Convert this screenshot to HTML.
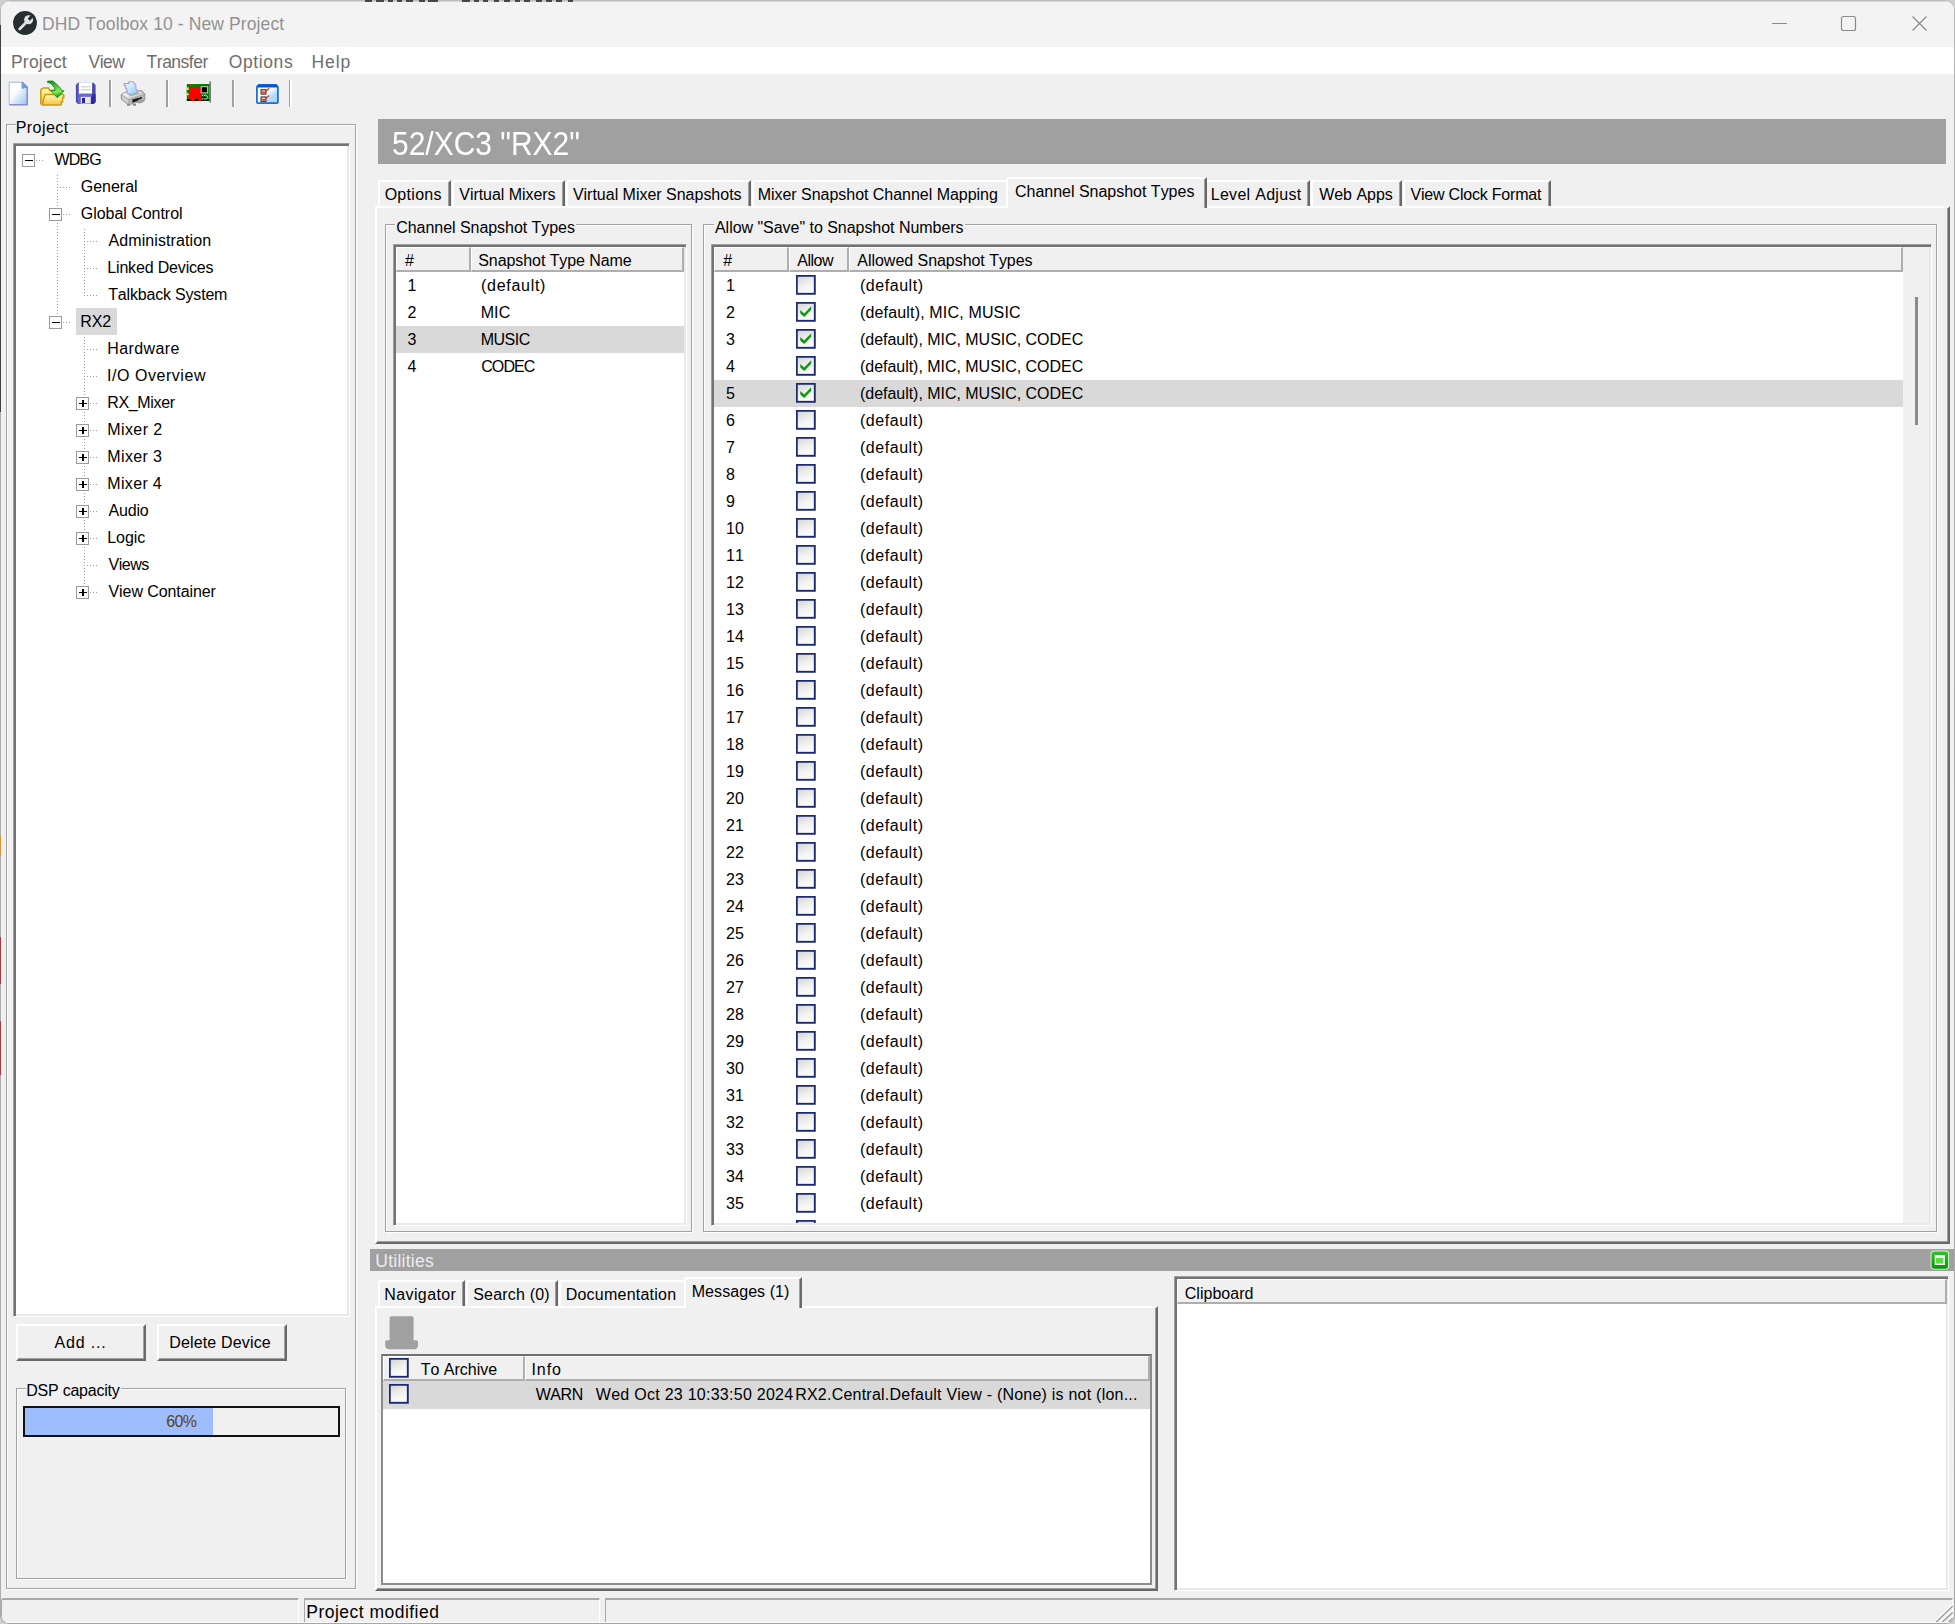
<!DOCTYPE html>
<html><head><meta charset="utf-8"><title>DHD Toolbox 10 - New Project</title>
<style>
*{box-sizing:border-box;margin:0;padding:0}
html,body{width:1955px;height:1624px;overflow:hidden}
body{position:relative;background:#cfcfcf;font-family:"Liberation Sans",sans-serif;font-size:16px;color:#000}
.a{position:absolute}
.x{position:absolute;white-space:nowrap;height:0;line-height:0;font-size:16px;font-kerning:none}
#frame{position:absolute;left:0;top:0;width:1955px;height:1624px;border-radius:10px 10px 9px 9px;background:linear-gradient(#bdbdbd 0,#b4b4b4 60px,#a6a6a6 100%)}
#win{position:absolute;left:1px;top:1px;width:1953px;height:1622px;background:#f0f0f0;border-radius:9px 9px 8px 8px;overflow:hidden}
.sep{position:absolute;width:3px;background:linear-gradient(90deg,#a0a0a0 0,#a0a0a0 1.5px,#fff 1.5px,#fff 3px)}
.gb{position:absolute;border:1px solid #a2a2a2;box-shadow:inset 1px 1px 0 #fff,1px 1px 0 #fff}
.sunk{position:absolute;background:#fff;border:1px solid;border-color:#a0a0a0 #fff #fff #a0a0a0;box-shadow:inset 2px 2px 0 #737373,inset -2px -2px 0 #e9e9e9}
.raised{position:absolute;border-style:solid;border-width:2px 2px 2px 2px;border-color:#fff #696969 #696969 #fff;box-shadow:inset -1px -1px 0 #a0a0a0}
.hdr{position:absolute;background:#f0f0f0;border-style:solid;border-width:1px 2px 2px 1px;border-color:#fff #aeaeae #aeaeae #fff}
.tab{position:absolute;background:#f0f0f0;border-style:solid;border-width:2px 2px 0 2px;border-color:#fff #696969 #f0f0f0 #fff;border-radius:3px 0 0 0;box-shadow:inset -1px 0 0 #a0a0a0}
.pm{position:absolute;width:13px;height:13px;border:1px solid #9a9a9a;background:#fff}
.pm:before{content:"";position:absolute;left:2px;top:4.6px;width:7.5px;height:1.7px;background:#000}
.pm.plus:after{content:"";position:absolute;left:4.9px;top:1.8px;width:1.7px;height:7.5px;background:#000}
.dv{position:absolute;width:1.5px;background-image:linear-gradient(#9c9c9c 50%,transparent 50%);background-size:1.5px 3px}
.dh{position:absolute;height:1.5px;background-image:linear-gradient(90deg,#9c9c9c 50%,transparent 50%);background-size:3px 1.5px}

</style></head>
<body>
<div id="frame"></div>
<div class="a" style="left:0;top:25px;width:1px;height:387px;background:#404040"></div><div class="a" style="left:0;top:412px;width:1px;height:1204px;background:#adadad"></div><div class="a" style="left:0;top:836px;width:1px;height:20px;background:#d89434"></div><div class="a" style="left:0;top:937px;width:1px;height:47px;background:#a83844"></div><div class="a" style="left:0;top:1021px;width:1px;height:54px;background:#a83844"></div>
<svg width="0" height="0" style="position:absolute"><defs>
<linearGradient id="gcb" x1="0.2" y1="0" x2="0.6" y2="1"><stop offset="0" stop-color="#d6d6d2"/><stop offset="0.55" stop-color="#f2f2f0"/><stop offset="1" stop-color="#fdfdfd"/></linearGradient>
<symbol id="cb" viewBox="0 0 20 20"><rect x="0.8" y="0.8" width="18" height="18" fill="url(#gcb)" stroke="#1c2a72" stroke-width="1.9"/></symbol>
<symbol id="cbc" viewBox="0 0 20 20"><rect x="0.8" y="0.8" width="18" height="18" fill="url(#gcb)" stroke="#1c2a72" stroke-width="1.9"/><path d="M4.3 8 L8.2 11.5 L15.2 4.2 V7.7 L8.2 15 L4.3 11.5 Z" fill="#089a08"/></symbol>
</defs></svg>
<div id="win">
<div class="a" style="left:0px;top:0px;width:1953px;height:46px;background:#f3f3f3"></div>
<div class="a" style="left:0px;top:46px;width:1953px;height:27px;background:#fff"></div>
<svg class="a" style="left:12px;top:10px;filter:blur(.35px)" width="24" height="24" viewBox="0 0 24 24"><defs><clipPath id="cw"><circle cx="12" cy="12" r="11.9"/></clipPath></defs><circle cx="12" cy="12" r="11.9" fill="#262e30"/><path d="M6.7 18 L13.6 11" stroke="#dde3e5" stroke-width="2.7" stroke-linecap="round"/><circle cx="15.6" cy="8.8" r="4.5" fill="#dde3e5"/><path d="M16.7 7.7 L21.5 2.9" stroke="#262e30" stroke-width="3.2" stroke-linecap="round" clip-path="url(#cw)"/></svg>
<div class="x" style="left:41.06px;top:23px;letter-spacing:0.104px;font-size:17.5px;color:#929292;">DHD Toolbox 10 - New Project</div>
<svg class="a" style="left:1759px;top:9px" width="180" height="30" viewBox="0 0 180 30" fill="none" stroke="#8a8a8a" stroke-width="1.2"><path d="M12 13.5 H27"/><rect x="81.5" y="6.5" width="14" height="14" rx="2"/><path d="M152.5 6.5 L166.5 20.5 M166.5 6.5 L152.5 20.5"/></svg>
<div class="x" style="left:9.96px;top:61px;letter-spacing:0.216px;font-size:17.5px;color:#6e6e6e;">Project</div>
<div class="x" style="left:87.52px;top:61px;letter-spacing:-0.499px;font-size:17.5px;color:#6e6e6e;">View</div>
<div class="x" style="left:145.61px;top:61px;letter-spacing:-0.496px;font-size:17.5px;color:#6e6e6e;">Transfer</div>
<div class="x" style="left:227.77px;top:61px;letter-spacing:0.592px;font-size:17.5px;color:#6e6e6e;">Options</div>
<div class="x" style="left:310.56px;top:61px;letter-spacing:0.900px;font-size:17.5px;color:#6e6e6e;">Help</div>
<div class="sep" style="left:107.8px;top:79px;width:3px;height:27px;"></div>
<div class="sep" style="left:164.8px;top:79px;width:3px;height:27px;"></div>
<div class="sep" style="left:230.8px;top:79px;width:3px;height:27px;"></div>
<div class="sep" style="left:287.9px;top:79px;width:3px;height:27px;"></div>
<svg class="a" style="left:5px;top:78px;filter:blur(0.35px);overflow:visible" width="25" height="29" viewBox="6 79 25 29"><defs><linearGradient id="gnew" x1="0.1" y1="0.15" x2="0.95" y2="0.95"><stop offset="0.3" stop-color="#ffffff"/><stop offset="0.6" stop-color="#d4e6fa"/><stop offset="1" stop-color="#94ccf4"/></linearGradient></defs>
<path d="M9.3 82.2 H22 L27.2 87.2 V104.8 H9.3 Z" fill="url(#gnew)"/>
<path d="M9.3 104.8 V82.2 H22" fill="none" stroke="#bccaee" stroke-width="1.5"/>
<path d="M22 82.2 L27.2 87.2 V104.8 H9.3" fill="none" stroke="#8c8cc4" stroke-width="1.6"/>
<path d="M22 82.2 L27.2 87.2 L22.2 88.4 Z" fill="#56a6f0" stroke="#8494cc" stroke-width="1"/></svg>
<svg class="a" style="left:37px;top:78px;filter:blur(0.35px);overflow:visible" width="28" height="29" viewBox="38 79 28 29"><defs><linearGradient id="gfb" x1="0" y1="0" x2="0" y2="1"><stop offset="0" stop-color="#ffffa8"/><stop offset="1" stop-color="#f0c040"/></linearGradient>
<linearGradient id="gff" x1="0" y1="0" x2="0" y2="1"><stop offset="0" stop-color="#fff4c0"/><stop offset="0.3" stop-color="#ffe888"/><stop offset="1" stop-color="#fcc04c"/></linearGradient>
<linearGradient id="gar" x1="0" y1="0" x2="0.3" y2="1"><stop offset="0" stop-color="#0c8a0c"/><stop offset="0.75" stop-color="#86ea58"/><stop offset="1" stop-color="#2aa020"/></linearGradient></defs>
<path d="M40.8 104.5 V90.5 Q40.8 89 42.3 88.8 L43.4 88 H48.4 L49.6 90.3 H58 V95" fill="url(#gfb)" stroke="#c89a18" stroke-width="1.5"/>
<path d="M42.2 105 L44.6 95.6 Q44.9 94.6 46 94.6 H63 Q63.8 94.6 63.8 95.4 V97.6 H62.6 V101.8 H61.4 V104 Q61.4 105 60.4 105 Z" fill="url(#gff)" stroke="#c89a18" stroke-width="1.5"/>
<path d="M47.6 81.1 L52.8 81.1 L55.6 83.2 L58.2 85.8 L60.6 88.4 L61.6 90.7 L64 90.8 L57.4 97.8 L50.6 90.8 L55 90.6 L54.6 88 L53.2 86 L51.8 84.4 L50.2 83.2 L47.6 82.4 Z" fill="url(#gar)" stroke="#148c14" stroke-width="0.9" stroke-linejoin="round"/></svg>
<svg class="a" style="left:73px;top:80px;filter:blur(0.35px);overflow:visible" width="24" height="25" viewBox="74 81 24 25"><path d="M75.9 85 L78 82.8 H93.4 L95.6 85 V102 L93.6 104 H78 L75.9 102 Z" fill="#4848b0"/>
<path d="M77.6 84 H80 V104 H79 L77.6 102.6 Z" fill="#6464d4"/>
<path d="M91 94 H95.6 V102 L93.6 104 H91 Z" fill="#2c2c9c"/>
<path d="M79 94 H92 V96.8 H79 Z" fill="#6868d0"/>
<rect x="78.9" y="82.6" width="13.2" height="11" fill="#ffffff"/>
<rect x="81" y="86.1" width="9.8" height="1.3" fill="#d4d4d4"/><rect x="81" y="89.1" width="9.8" height="1.3" fill="#d4d4d4"/>
<rect x="80.6" y="96.8" width="10.2" height="6.8" fill="#e6e4e2"/><rect x="80.6" y="103" width="10.2" height="1" fill="#a8a8c0"/>
<rect x="82" y="98" width="3" height="5" fill="#28269a"/></svg>
<svg class="a" style="left:118px;top:78px;filter:blur(0.45px);overflow:visible" width="28" height="29" viewBox="119 79 28 29"><defs><linearGradient id="gpp" x1="0" y1="0" x2="1" y2="1"><stop offset="0.1" stop-color="#f4fbff"/><stop offset="1" stop-color="#8cccf8"/></linearGradient>
<linearGradient id="gpt" x1="0" y1="0" x2="1" y2="0.4"><stop offset="0" stop-color="#ffffff"/><stop offset="0.5" stop-color="#e4e4e4"/><stop offset="1" stop-color="#c8c8c8"/></linearGradient></defs>
<path d="M121.2 94.6 L126.6 91.6 L141.4 90.6 L144.8 93.8 L144.8 100 L128.6 104.8 L121.4 99.4 Z" fill="#a8a8a8" stroke="#8c8c8c" stroke-width="0.9"/>
<path d="M122 94.6 L127 92 L141 91.2 L144 94 L128.4 98.8 Z" fill="url(#gpt)"/>
<path d="M122 95.6 L128.2 99.8 L128.2 104 L122 99.2 Z" fill="#cfcfcf"/>
<path d="M128.8 99.8 L144.2 95 L144.2 99.6 L128.8 104 Z" fill="#b4b4b4"/>
<path d="M132.4 99.6 L141.8 97 L141.8 98.8 L137.8 100 L137.8 101 L132.4 102.6 Z" fill="#181818"/>
<path d="M134.5 102 L140 100.4 L145 101.6 L139.6 103.4 Z" fill="#9c9c9c"/>
<rect x="127" y="104" width="3" height="1.8" fill="#8c8c8c"/><rect x="133" y="104" width="3" height="1.8" fill="#8c8c8c"/>
<path d="M124.2 83.6 H128.8 V81.8 H133 L135.8 85 L136 89 L137.4 91.2 L137.2 92.4 Q132 95.4 127.2 93.4 L127 89.2 L125.6 88.6 V85.6 H124.2 Z" fill="url(#gpp)" stroke="#a4a0dc" stroke-width="1.1"/>
<path d="M127.4 93.4 Q132 95.6 137.2 92.6 L139.6 93.8 L130.4 96.4 Z" fill="#a8a8b0" opacity="0.8"/></svg>
<svg class="a" style="left:183px;top:78px;filter:blur(0.4px);overflow:visible" width="29" height="26" viewBox="184 79 29 26"><rect x="186" y="83.2" width="24" height="18.6" fill="#f6f4f8"/>
<rect x="186.8" y="84" width="22.8" height="16.9" fill="#008000"/>
<rect x="186.8" y="99.2" width="22.8" height="1.7" fill="#0c0c0c"/>
<path d="M189 87.5 H200 L201.6 89.6 V100.9 H199 L196.6 96.4 L194.2 100.9 H191.4 L187 95 L190.6 91.4 L188.4 89.4 Z" fill="#ff0000"/>
<path d="M186.8 89.6 L190.8 91.5 L186.8 93.6 Z" fill="#008000"/>
<rect x="186.8" y="87.4" width="1.8" height="2.6" fill="#ffff00"/><rect x="186.8" y="93.2" width="1.8" height="2" fill="#ffff00"/>
<rect x="190" y="84.2" width="1.3" height="1.8" fill="#f02020"/><rect x="193.2" y="84.2" width="1.3" height="1.8" fill="#f02020"/>
<rect x="201.2" y="86.7" width="6.4" height="6.2" fill="#101010" stroke="#b4b4b4" stroke-width="1.2"/>
<rect x="202.2" y="87.8" width="3.8" height="3.8" fill="#000"/>
<path d="M201.8 97.3 H207" stroke="#000" stroke-width="1.2"/>
<path d="M202 95.5 H206 M202 99 H206" stroke="#d8d8d8" stroke-width="1" stroke-dasharray="1.2 1"/>
<path d="M205.4 94.8 L208 97.3 L205.4 99.8" stroke="#d8d8d8" stroke-width="1" fill="none"/>
<rect x="209.4" y="81.4" width="1.5" height="21.2" fill="#6c6c6c"/></svg>
<svg class="a" style="left:253px;top:81px;filter:blur(0.4px);overflow:visible" width="27" height="24" viewBox="254 82 27 24"><defs><linearGradient id="gop" x1="0.1" y1="0.1" x2="0.9" y2="0.9"><stop offset="0.42" stop-color="#ffffff"/><stop offset="0.72" stop-color="#b4dcfe"/><stop offset="1" stop-color="#a8d2fc"/></linearGradient></defs>
<path d="M256.9 87 Q256.9 86.2 257.8 86 L258.6 85 H276.2 L277 86 Q277.9 86.2 277.9 87 V102.2 Q277.9 103.1 277 103.1 H257.8 Q256.9 103.1 256.9 102.2 Z" fill="url(#gop)" stroke="#1e70d8" stroke-width="1.8"/>
<path d="M257.4 87.6 V86.6 L258.8 84.6 H276 L277.4 86.6 V87.6 Z" fill="#0058d0"/>
<rect x="261.1" y="89.7" width="4.8" height="4.4" fill="#f8e0dc" stroke="#404040" stroke-width="1.2"/>
<rect x="261.1" y="97" width="4.8" height="4.4" fill="#f8e0dc" stroke="#404040" stroke-width="1.2"/>
<path d="M262.2 91.4 L263.8 93 L269.2 88.2" fill="none" stroke="#d84424" stroke-width="1.5"/>
<path d="M262.2 98.7 L263.8 100.3 L269.2 95.5" fill="none" stroke="#d84424" stroke-width="1.5"/></svg>
<div class="gb" style="left:5px;top:123px;width:350px;height:1465px;"></div>
<div class="a" style="left:15px;top:119px;width:53px;height:10px;background:#f0f0f0"></div>
<div class="x" style="left:14.69px;top:127px;letter-spacing:0.439px;">Project</div>
<div class="sunk" style="left:12px;top:142px;width:337px;height:1174px;"></div>
<div class="dv" style="left:55.5px;top:173.5px;width:1.5px;height:148px;"></div>
<div class="dv" style="left:82.5px;top:227.5px;width:1.5px;height:67px;"></div>
<div class="dv" style="left:82.5px;top:335.5px;width:1.5px;height:256px;"></div>
<div class="dh" style="left:35px;top:158.6px;width:8px;height:1.5px;"></div>
<div class="x" style="left:53.53px;top:159px;letter-spacing:-0.900px;">WDBG</div>
<div class="pm" style="left:21px;top:153px;width:13px;height:13px;"></div>
<div class="dh" style="left:55.5px;top:185.6px;width:13.5px;height:1.5px;"></div>
<div class="x" style="left:79.80px;top:186px;letter-spacing:-0.024px;">General</div>
<div class="dh" style="left:62px;top:212.6px;width:8px;height:1.5px;"></div>
<div class="x" style="left:79.80px;top:213px;letter-spacing:-0.038px;">Global Control</div>
<div class="pm" style="left:48px;top:207px;width:13px;height:13px;"></div>
<div class="dh" style="left:82.5px;top:239.6px;width:13.5px;height:1.5px;"></div>
<div class="x" style="left:107.57px;top:240px;letter-spacing:0.084px;">Administration</div>
<div class="dh" style="left:82.5px;top:266.6px;width:13.5px;height:1.5px;"></div>
<div class="x" style="left:106.29px;top:267px;letter-spacing:-0.170px;">Linked Devices</div>
<div class="dh" style="left:82.5px;top:293.6px;width:13.5px;height:1.5px;"></div>
<div class="x" style="left:107.24px;top:294px;letter-spacing:-0.186px;">Talkback System</div>
<div class="dh" style="left:62px;top:320.6px;width:8px;height:1.5px;"></div>
<div class="a" style="left:75px;top:307px;width:41px;height:27px;background:#d9d9d9"></div>
<div class="x" style="left:79.29px;top:321px;letter-spacing:-0.154px;">RX2</div>
<div class="pm" style="left:48px;top:315px;width:13px;height:13px;"></div>
<div class="dh" style="left:82.5px;top:347.6px;width:13.5px;height:1.5px;"></div>
<div class="x" style="left:106.29px;top:348px;letter-spacing:0.381px;">Hardware</div>
<div class="dh" style="left:82.5px;top:374.6px;width:13.5px;height:1.5px;"></div>
<div class="x" style="left:106.12px;top:375px;letter-spacing:0.534px;">I/O Overview</div>
<div class="dh" style="left:89px;top:401.6px;width:8px;height:1.5px;"></div>
<div class="x" style="left:106.29px;top:402px;letter-spacing:-0.351px;">RX_Mixer</div>
<div class="pm plus" style="left:75px;top:396px;width:13px;height:13px;"></div>
<div class="dh" style="left:89px;top:428.6px;width:8px;height:1.5px;"></div>
<div class="x" style="left:106.29px;top:429px;letter-spacing:0.394px;">Mixer 2</div>
<div class="pm plus" style="left:75px;top:423px;width:13px;height:13px;"></div>
<div class="dh" style="left:89px;top:455.6px;width:8px;height:1.5px;"></div>
<div class="x" style="left:106.29px;top:456px;letter-spacing:0.377px;">Mixer 3</div>
<div class="pm plus" style="left:75px;top:450px;width:13px;height:13px;"></div>
<div class="dh" style="left:89px;top:482.6px;width:8px;height:1.5px;"></div>
<div class="x" style="left:106.29px;top:483px;letter-spacing:0.338px;">Mixer 4</div>
<div class="pm plus" style="left:75px;top:477px;width:13px;height:13px;"></div>
<div class="dh" style="left:89px;top:509.6px;width:8px;height:1.5px;"></div>
<div class="x" style="left:107.57px;top:510px;letter-spacing:-0.180px;">Audio</div>
<div class="pm plus" style="left:75px;top:504px;width:13px;height:13px;"></div>
<div class="dh" style="left:89px;top:536.6px;width:8px;height:1.5px;"></div>
<div class="x" style="left:106.29px;top:537px;letter-spacing:-0.079px;">Logic</div>
<div class="pm plus" style="left:75px;top:531px;width:13px;height:13px;"></div>
<div class="dh" style="left:82.5px;top:563.6px;width:13.5px;height:1.5px;"></div>
<div class="x" style="left:107.53px;top:564px;letter-spacing:-0.483px;">Views</div>
<div class="dh" style="left:89px;top:590.6px;width:8px;height:1.5px;"></div>
<div class="x" style="left:107.53px;top:591px;letter-spacing:-0.082px;">View Container</div>
<div class="pm plus" style="left:75px;top:585px;width:13px;height:13px;"></div>
<div class="raised" style="left:15px;top:1323px;width:130px;height:37px;"></div>
<div class="x" style="left:53.57px;top:1342px;letter-spacing:0.807px;">Add ...</div>
<div class="raised" style="left:156px;top:1323px;width:130px;height:37px;"></div>
<div class="x" style="left:168.19px;top:1342px;letter-spacing:0.160px;">Delete Device</div>
<div class="gb" style="left:15px;top:1387px;width:330px;height:191px;"></div>
<div class="a" style="left:25px;top:1383px;width:95px;height:10px;background:#f0f0f0"></div>
<div class="x" style="left:25.29px;top:1390px;letter-spacing:-0.236px;">DSP capacity</div>
<div class="a" style="left:22px;top:1405px;width:317px;height:31px;border:2px solid #111;background:#f0f0f0"></div>
<div class="a" style="left:24px;top:1407px;width:187.5px;height:27px;background:#9dbdff"></div>
<div class="x" style="left:165.19px;top:1421px;letter-spacing:-0.620px;color:#5a4320;">60%</div>
<div class="a" style="left:377px;top:118px;width:1568px;height:45px;background:#a0a0a0"></div>
<div class="x" style="left:391.40px;top:143px;transform:scaleX(0.9082);transform-origin:0 0;font-size:33px;color:#fff;">52/XC3 "RX2"</div>
<div class="raised" style="left:374px;top:205px;width:1575px;height:1038px;"></div>
<div class="tab" style="left:377px;top:179px;width:73px;height:26px;"></div>
<div class="x" style="left:383.64px;top:194px;letter-spacing:0.299px;">Options</div>
<div class="tab" style="left:451px;top:179px;width:113px;height:26px;"></div>
<div class="x" style="left:458.33px;top:194px;letter-spacing:-0.051px;">Virtual Mixers</div>
<div class="tab" style="left:565px;top:179px;width:185px;height:26px;"></div>
<div class="x" style="left:571.93px;top:194px;letter-spacing:-0.014px;">Virtual Mixer Snapshots</div>
<div class="tab" style="left:751px;top:179px;width:257px;height:26px;"></div>
<div class="x" style="left:756.69px;top:194px;letter-spacing:-0.031px;">Mixer Snapshot Channel Mapping</div>
<div class="tab" style="left:1204px;top:179px;width:105px;height:26px;"></div>
<div class="x" style="left:1209.69px;top:194px;letter-spacing:0.297px;">Level Adjust</div>
<div class="tab" style="left:1310px;top:179px;width:91px;height:26px;"></div>
<div class="x" style="left:1318.13px;top:194px;letter-spacing:-0.009px;">Web Apps</div>
<div class="tab" style="left:1402px;top:179px;width:148px;height:26px;"></div>
<div class="x" style="left:1409.43px;top:194px;letter-spacing:-0.204px;">View Clock Format</div>
<div class="tab" style="left:1005px;top:176px;width:201px;height:31px;"></div>
<div class="x" style="left:1013.99px;top:191px;letter-spacing:-0.013px;">Channel Snapshot Types</div>
<div class="gb" style="left:384px;top:223px;width:307px;height:1008px;"></div>
<div class="a" style="left:394px;top:219px;width:181px;height:10px;background:#f0f0f0"></div>
<div class="x" style="left:395.19px;top:227px;letter-spacing:-0.042px;">Channel Snapshot Types</div>
<div class="sunk" style="left:392px;top:243px;width:294px;height:982px;"></div>
<div class="hdr" style="left:395px;top:246px;width:75px;height:25px;"></div>
<div class="x" style="left:403.93px;top:260px;">#</div>
<div class="hdr" style="left:470px;top:246px;width:213px;height:25px;"></div>
<div class="x" style="left:477.27px;top:260px;letter-spacing:-0.077px;">Snapshot Type Name</div>
<div class="x" style="left:406.60px;top:285px;">1</div>
<div class="x" style="left:480.01px;top:285px;letter-spacing:0.711px;">(default)</div>
<div class="x" style="left:406.60px;top:312px;">2</div>
<div class="x" style="left:479.69px;top:312px;letter-spacing:0.097px;">MIC</div>
<div class="a" style="left:395px;top:325px;width:288px;height:27px;background:#d9d9d9"></div>
<div class="x" style="left:406.60px;top:339px;">3</div>
<div class="x" style="left:479.69px;top:339px;letter-spacing:-0.508px;">MUSIC</div>
<div class="x" style="left:406.60px;top:366px;">4</div>
<div class="x" style="left:480.19px;top:366px;letter-spacing:-0.900px;">CODEC</div>
<div class="gb" style="left:702px;top:223px;width:1234px;height:1008px;"></div>
<div class="a" style="left:713px;top:219px;width:251px;height:10px;background:#f0f0f0"></div>
<div class="x" style="left:713.97px;top:227px;letter-spacing:-0.035px;">Allow "Save" to Snapshot Numbers</div>
<div class="sunk" style="left:710px;top:243px;width:1221px;height:982px;"></div>
<div class="hdr" style="left:713px;top:246px;width:75px;height:25px;"></div>
<div class="x" style="left:722.33px;top:260px;">#</div>
<div class="hdr" style="left:788px;top:246px;width:60px;height:25px;"></div>
<div class="x" style="left:796.37px;top:260px;letter-spacing:-0.511px;">Allow</div>
<div class="hdr" style="left:848px;top:246px;width:1054px;height:25px;"></div>
<div class="x" style="left:856.37px;top:260px;letter-spacing:-0.042px;">Allowed Snapshot Types</div>
<div class="a" style="left:1902px;top:246px;width:26px;height:976px;background:#f0f0f0"></div>
<div class="a" style="left:1914px;top:296px;width:3px;height:128px;background:#8b8b8b"></div>
<div class="a" style="left:713px;top:271px;width:1189px;height:951px;overflow:hidden">
<div class="x" style="left:11.90px;top:14px;letter-spacing:0.2px;">1</div>
<svg class="a" style="left:82px;top:3px" width="20" height="20"><use href="#cb"/></svg>
<div class="x" style="left:146.01px;top:14px;letter-spacing:0.536px;">(default)</div>
<div class="x" style="left:11.90px;top:41px;letter-spacing:0.2px;">2</div>
<svg class="a" style="left:82px;top:30px" width="20" height="20"><use href="#cbc"/></svg>
<div class="x" style="left:146.01px;top:41px;letter-spacing:0.162px;">(default), MIC, MUSIC</div>
<div class="x" style="left:11.90px;top:68px;letter-spacing:0.2px;">3</div>
<svg class="a" style="left:82px;top:57px" width="20" height="20"><use href="#cbc"/></svg>
<div class="x" style="left:146.01px;top:68px;letter-spacing:-0.031px;">(default), MIC, MUSIC, CODEC</div>
<div class="x" style="left:11.90px;top:95px;letter-spacing:0.2px;">4</div>
<svg class="a" style="left:82px;top:84px" width="20" height="20"><use href="#cbc"/></svg>
<div class="x" style="left:146.01px;top:95px;letter-spacing:-0.031px;">(default), MIC, MUSIC, CODEC</div>
<div class="a" style="left:0px;top:108px;width:1189px;height:27px;background:#d9d9d9"></div>
<div class="x" style="left:11.90px;top:122px;letter-spacing:0.2px;">5</div>
<svg class="a" style="left:82px;top:111px" width="20" height="20"><use href="#cbc"/></svg>
<div class="x" style="left:146.01px;top:122px;letter-spacing:-0.031px;">(default), MIC, MUSIC, CODEC</div>
<div class="x" style="left:11.90px;top:149px;letter-spacing:0.2px;">6</div>
<svg class="a" style="left:82px;top:138px" width="20" height="20"><use href="#cb"/></svg>
<div class="x" style="left:146.01px;top:149px;letter-spacing:0.536px;">(default)</div>
<div class="x" style="left:11.90px;top:176px;letter-spacing:0.2px;">7</div>
<svg class="a" style="left:82px;top:165px" width="20" height="20"><use href="#cb"/></svg>
<div class="x" style="left:146.01px;top:176px;letter-spacing:0.536px;">(default)</div>
<div class="x" style="left:11.90px;top:203px;letter-spacing:0.2px;">8</div>
<svg class="a" style="left:82px;top:192px" width="20" height="20"><use href="#cb"/></svg>
<div class="x" style="left:146.01px;top:203px;letter-spacing:0.536px;">(default)</div>
<div class="x" style="left:11.90px;top:230px;letter-spacing:0.2px;">9</div>
<svg class="a" style="left:82px;top:219px" width="20" height="20"><use href="#cb"/></svg>
<div class="x" style="left:146.01px;top:230px;letter-spacing:0.536px;">(default)</div>
<div class="x" style="left:11.90px;top:257px;letter-spacing:0.2px;">10</div>
<svg class="a" style="left:82px;top:246px" width="20" height="20"><use href="#cb"/></svg>
<div class="x" style="left:146.01px;top:257px;letter-spacing:0.536px;">(default)</div>
<div class="x" style="left:11.90px;top:284px;letter-spacing:0.2px;">11</div>
<svg class="a" style="left:82px;top:273px" width="20" height="20"><use href="#cb"/></svg>
<div class="x" style="left:146.01px;top:284px;letter-spacing:0.536px;">(default)</div>
<div class="x" style="left:11.90px;top:311px;letter-spacing:0.2px;">12</div>
<svg class="a" style="left:82px;top:300px" width="20" height="20"><use href="#cb"/></svg>
<div class="x" style="left:146.01px;top:311px;letter-spacing:0.536px;">(default)</div>
<div class="x" style="left:11.90px;top:338px;letter-spacing:0.2px;">13</div>
<svg class="a" style="left:82px;top:327px" width="20" height="20"><use href="#cb"/></svg>
<div class="x" style="left:146.01px;top:338px;letter-spacing:0.536px;">(default)</div>
<div class="x" style="left:11.90px;top:365px;letter-spacing:0.2px;">14</div>
<svg class="a" style="left:82px;top:354px" width="20" height="20"><use href="#cb"/></svg>
<div class="x" style="left:146.01px;top:365px;letter-spacing:0.536px;">(default)</div>
<div class="x" style="left:11.90px;top:392px;letter-spacing:0.2px;">15</div>
<svg class="a" style="left:82px;top:381px" width="20" height="20"><use href="#cb"/></svg>
<div class="x" style="left:146.01px;top:392px;letter-spacing:0.536px;">(default)</div>
<div class="x" style="left:11.90px;top:419px;letter-spacing:0.2px;">16</div>
<svg class="a" style="left:82px;top:408px" width="20" height="20"><use href="#cb"/></svg>
<div class="x" style="left:146.01px;top:419px;letter-spacing:0.536px;">(default)</div>
<div class="x" style="left:11.90px;top:446px;letter-spacing:0.2px;">17</div>
<svg class="a" style="left:82px;top:435px" width="20" height="20"><use href="#cb"/></svg>
<div class="x" style="left:146.01px;top:446px;letter-spacing:0.536px;">(default)</div>
<div class="x" style="left:11.90px;top:473px;letter-spacing:0.2px;">18</div>
<svg class="a" style="left:82px;top:462px" width="20" height="20"><use href="#cb"/></svg>
<div class="x" style="left:146.01px;top:473px;letter-spacing:0.536px;">(default)</div>
<div class="x" style="left:11.90px;top:500px;letter-spacing:0.2px;">19</div>
<svg class="a" style="left:82px;top:489px" width="20" height="20"><use href="#cb"/></svg>
<div class="x" style="left:146.01px;top:500px;letter-spacing:0.536px;">(default)</div>
<div class="x" style="left:11.90px;top:527px;letter-spacing:0.2px;">20</div>
<svg class="a" style="left:82px;top:516px" width="20" height="20"><use href="#cb"/></svg>
<div class="x" style="left:146.01px;top:527px;letter-spacing:0.536px;">(default)</div>
<div class="x" style="left:11.90px;top:554px;letter-spacing:0.2px;">21</div>
<svg class="a" style="left:82px;top:543px" width="20" height="20"><use href="#cb"/></svg>
<div class="x" style="left:146.01px;top:554px;letter-spacing:0.536px;">(default)</div>
<div class="x" style="left:11.90px;top:581px;letter-spacing:0.2px;">22</div>
<svg class="a" style="left:82px;top:570px" width="20" height="20"><use href="#cb"/></svg>
<div class="x" style="left:146.01px;top:581px;letter-spacing:0.536px;">(default)</div>
<div class="x" style="left:11.90px;top:608px;letter-spacing:0.2px;">23</div>
<svg class="a" style="left:82px;top:597px" width="20" height="20"><use href="#cb"/></svg>
<div class="x" style="left:146.01px;top:608px;letter-spacing:0.536px;">(default)</div>
<div class="x" style="left:11.90px;top:635px;letter-spacing:0.2px;">24</div>
<svg class="a" style="left:82px;top:624px" width="20" height="20"><use href="#cb"/></svg>
<div class="x" style="left:146.01px;top:635px;letter-spacing:0.536px;">(default)</div>
<div class="x" style="left:11.90px;top:662px;letter-spacing:0.2px;">25</div>
<svg class="a" style="left:82px;top:651px" width="20" height="20"><use href="#cb"/></svg>
<div class="x" style="left:146.01px;top:662px;letter-spacing:0.536px;">(default)</div>
<div class="x" style="left:11.90px;top:689px;letter-spacing:0.2px;">26</div>
<svg class="a" style="left:82px;top:678px" width="20" height="20"><use href="#cb"/></svg>
<div class="x" style="left:146.01px;top:689px;letter-spacing:0.536px;">(default)</div>
<div class="x" style="left:11.90px;top:716px;letter-spacing:0.2px;">27</div>
<svg class="a" style="left:82px;top:705px" width="20" height="20"><use href="#cb"/></svg>
<div class="x" style="left:146.01px;top:716px;letter-spacing:0.536px;">(default)</div>
<div class="x" style="left:11.90px;top:743px;letter-spacing:0.2px;">28</div>
<svg class="a" style="left:82px;top:732px" width="20" height="20"><use href="#cb"/></svg>
<div class="x" style="left:146.01px;top:743px;letter-spacing:0.536px;">(default)</div>
<div class="x" style="left:11.90px;top:770px;letter-spacing:0.2px;">29</div>
<svg class="a" style="left:82px;top:759px" width="20" height="20"><use href="#cb"/></svg>
<div class="x" style="left:146.01px;top:770px;letter-spacing:0.536px;">(default)</div>
<div class="x" style="left:11.90px;top:797px;letter-spacing:0.2px;">30</div>
<svg class="a" style="left:82px;top:786px" width="20" height="20"><use href="#cb"/></svg>
<div class="x" style="left:146.01px;top:797px;letter-spacing:0.536px;">(default)</div>
<div class="x" style="left:11.90px;top:824px;letter-spacing:0.2px;">31</div>
<svg class="a" style="left:82px;top:813px" width="20" height="20"><use href="#cb"/></svg>
<div class="x" style="left:146.01px;top:824px;letter-spacing:0.536px;">(default)</div>
<div class="x" style="left:11.90px;top:851px;letter-spacing:0.2px;">32</div>
<svg class="a" style="left:82px;top:840px" width="20" height="20"><use href="#cb"/></svg>
<div class="x" style="left:146.01px;top:851px;letter-spacing:0.536px;">(default)</div>
<div class="x" style="left:11.90px;top:878px;letter-spacing:0.2px;">33</div>
<svg class="a" style="left:82px;top:867px" width="20" height="20"><use href="#cb"/></svg>
<div class="x" style="left:146.01px;top:878px;letter-spacing:0.536px;">(default)</div>
<div class="x" style="left:11.90px;top:905px;letter-spacing:0.2px;">34</div>
<svg class="a" style="left:82px;top:894px" width="20" height="20"><use href="#cb"/></svg>
<div class="x" style="left:146.01px;top:905px;letter-spacing:0.536px;">(default)</div>
<div class="x" style="left:11.90px;top:932px;letter-spacing:0.2px;">35</div>
<svg class="a" style="left:82px;top:921px" width="20" height="20"><use href="#cb"/></svg>
<div class="x" style="left:146.01px;top:932px;letter-spacing:0.536px;">(default)</div>
<div class="x" style="left:11.90px;top:959px;letter-spacing:0.2px;">36</div>
<svg class="a" style="left:82px;top:948px" width="20" height="20"><use href="#cb"/></svg>
<div class="x" style="left:146.01px;top:959px;letter-spacing:0.536px;">(default)</div>
</div>
<div class="a" style="left:369px;top:1248px;width:1584px;height:22px;background:#a0a0a0"></div>
<div class="x" style="left:374.25px;top:1259.6px;letter-spacing:0.248px;font-size:17.5px;color:#ececec;">Utilities</div>
<svg class="a" style="left:1929px;top:1249px;filter:blur(.3px)" width="20" height="20" viewBox="0 0 20 20"><defs><linearGradient id="ggr" x1="0" y1="0" x2="0" y2="1"><stop offset="0" stop-color="#2cc42c"/><stop offset="1" stop-color="#089808"/></linearGradient></defs><rect x="0.5" y="0.5" width="18.6" height="19" rx="4" fill="#d8f8d4"/><rect x="1.5" y="1.5" width="16.6" height="17.2" rx="3" fill="url(#ggr)"/><rect x="4.7" y="5" width="10.2" height="10" fill="#fbfffa"/><rect x="6" y="7.9" width="7.4" height="5.7" fill="#56dc3c"/></svg>
<div class="raised" style="left:374px;top:1305px;width:783px;height:285px;"></div>
<div class="tab" style="left:377px;top:1279px;width:87px;height:26px;"></div>
<div class="x" style="left:383.29px;top:1294px;letter-spacing:0.388px;">Navigator</div>
<div class="tab" style="left:465px;top:1279px;width:92px;height:26px;"></div>
<div class="x" style="left:472.27px;top:1294px;letter-spacing:0.180px;">Search (0)</div>
<div class="tab" style="left:558px;top:1279px;width:128px;height:26px;"></div>
<div class="x" style="left:564.69px;top:1294px;letter-spacing:0.228px;">Documentation</div>
<div class="tab" style="left:683px;top:1276px;width:118px;height:31px;"></div>
<div class="x" style="left:690.69px;top:1291px;letter-spacing:0.071px;">Messages (1)</div>
<svg class="a" style="left:383px;top:1314px;filter:blur(.3px)" width="36" height="36" viewBox="384 1315 36 36"><path d="M389.6 1318 Q389.6 1316.3 391.5 1316.3 H411.7 Q413.6 1316.3 413.6 1318 V1340.3 H416.5 Q418 1340.3 418 1341.8 V1345.5 Q418 1349.2 414 1349.2 H389.2 Q385.2 1349.2 385.2 1345.5 V1341.8 Q385.2 1340.3 386.7 1340.3 H389.6 Z" fill="#a0a0a0"/></svg>
<div class="a" style="left:380px;top:1353px;width:771px;height:231px;background:#fff;border:2px solid #8c8c8c;border-top-color:#707070"></div>
<div class="hdr" style="left:382px;top:1355px;width:142px;height:25px;"></div>
<div class="hdr" style="left:524px;top:1355px;width:625px;height:25px;"></div>
<svg class="a" style="left:388px;top:1357px" width="20" height="20"><use href="#cb"/></svg>
<div class="x" style="left:419.64px;top:1369px;letter-spacing:0.000px;">To Archive</div>
<div class="x" style="left:530.52px;top:1369px;letter-spacing:0.900px;">Info</div>
<div class="a" style="left:382px;top:1380px;width:767px;height:28px;background:#d9d9d9"></div>
<svg class="a" style="left:388px;top:1383px" width="20" height="20"><use href="#cb"/></svg>
<div class="x" style="left:534.63px;top:1394px;letter-spacing:-0.403px;">WARN</div>
<div class="x" style="left:594.83px;top:1394px;letter-spacing:0.265px;">Wed Oct 23 10:33:50 2024</div>
<div class="x" style="left:794.19px;top:1394px;letter-spacing:0.225px;">RX2.Central.Default View - (None) is not (lon...</div>
<div class="sunk" style="left:1173px;top:1275px;width:775px;height:315px;"></div>
<div class="hdr" style="left:1176px;top:1278px;width:770px;height:25px;"></div>
<div class="x" style="left:1183.79px;top:1292.5px;letter-spacing:0.020px;">Clipboard</div>
<div class="a" style="left:0px;top:1597px;width:298px;height:25px;border-top:2px solid #a9a9a9;border-left:1px solid #a9a9a9;border-right:1px solid #fff;border-radius:3px 0 0 0"></div>
<div class="a" style="left:303px;top:1597px;width:296px;height:25px;border-top:2px solid #a9a9a9;border-left:1px solid #a9a9a9;border-right:1px solid #fff;border-bottom:1px solid #fafafa"></div>
<div class="a" style="left:604px;top:1597px;width:1348px;height:25px;border-top:2px solid #a9a9a9;border-left:1px solid #a9a9a9;border-right:1px solid #fff;border-bottom:1px solid #fafafa"></div>
<div class="x" style="left:305.26px;top:1611px;letter-spacing:0.479px;font-size:17.5px;">Project modified</div>
<svg class="a" style="left:1931px;top:1601px" width="22" height="21" viewBox="1932 1602 22 21" fill="none"><path d="M1935 1621.6 L1951.6 1605.2 M1941 1621.6 L1951.6 1611.6 M1947.5 1621.6 L1951.6 1617.6" stroke="#fff" stroke-width="1.4"/><path d="M1936.2 1622 L1952.8 1606 M1942.2 1622 L1952.8 1612.4 M1948.6 1622 L1952.8 1618.2" stroke="#a0a0a0" stroke-width="1.5"/></svg>
<div class="a" style="left:1px;top:1621px;width:1951px;height:1px;background:#fbfbfb"></div>
</div>
<div class="a" style="left:9px;top:1px;width:1937px;height:1px;background:#d6d6d6"></div>
<div class="a" style="left:365px;top:0;width:7px;height:2px;background:#303030;opacity:.85"></div>
<div class="a" style="left:376px;top:0;width:8px;height:2px;background:#303030;opacity:.85"></div>
<div class="a" style="left:388px;top:0;width:5px;height:2px;background:#303030;opacity:.85"></div>
<div class="a" style="left:397px;top:0;width:5px;height:2px;background:#303030;opacity:.85"></div>
<div class="a" style="left:406px;top:0;width:7px;height:2px;background:#303030;opacity:.85"></div>
<div class="a" style="left:419px;top:0;width:6px;height:2px;background:#303030;opacity:.85"></div>
<div class="a" style="left:428px;top:0;width:10px;height:2px;background:#303030;opacity:.85"></div>
<div class="a" style="left:462px;top:0;width:8px;height:2px;background:#303030;opacity:.85"></div>
<div class="a" style="left:474px;top:0;width:5px;height:2px;background:#303030;opacity:.85"></div>
<div class="a" style="left:483px;top:0;width:5px;height:2px;background:#303030;opacity:.85"></div>
<div class="a" style="left:494px;top:0;width:5px;height:2px;background:#303030;opacity:.85"></div>
<div class="a" style="left:504px;top:0;width:6px;height:2px;background:#303030;opacity:.85"></div>
<div class="a" style="left:515px;top:0;width:5px;height:2px;background:#303030;opacity:.85"></div>
<div class="a" style="left:524px;top:0;width:6px;height:2px;background:#303030;opacity:.85"></div>
<div class="a" style="left:536px;top:0;width:6px;height:2px;background:#303030;opacity:.85"></div>
<div class="a" style="left:546px;top:0;width:6px;height:2px;background:#303030;opacity:.85"></div>
<div class="a" style="left:556px;top:0;width:6px;height:2px;background:#303030;opacity:.85"></div>
<div class="a" style="left:568px;top:0;width:5px;height:2px;background:#303030;opacity:.85"></div>
</body></html>
